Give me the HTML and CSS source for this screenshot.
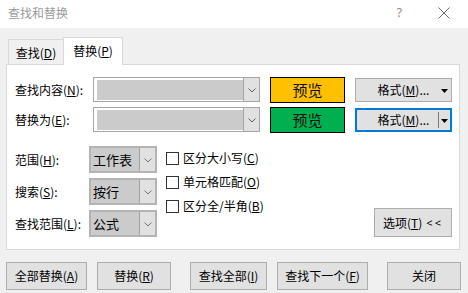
FILE: index.html
```html
<!DOCTYPE html>
<html lang="zh">
<head>
<meta charset="utf-8">
<title>查找和替换</title>
<link rel="stylesheet" href="styles.css">
</head>
<body>
<div class="window">
  <div class="titlebar">
    <span class="title">查找和替换</span>
    <span class="help">?</span>
    <span class="close"><svg width="12" height="12" viewBox="0 0 12 12"><path d="M0.5 0.5L11.5 11.5M11.5 0.5L0.5 11.5" stroke="#6b6b6b" stroke-width="1" fill="none"/></svg></span>
  </div>
  <div class="tabs">
    <div class="tab">查找(<u>D</u>)</div>
    <div class="tab active">替换(<u>P</u>)</div>
  </div>
  <div class="panel">
    <div class="top-grid">
      <div class="label">查找内容(<u>N</u>):</div>
      <div class="combo wide">
        <div class="field"></div>
        <div class="drop"><svg width="8" height="5" viewBox="0 0 8 5"><path d="M0.5 0.5L4 4L7.5 0.5" stroke="#606060" fill="none"/></svg></div>
      </div>
      <div class="preview yellow">预览</div>
      <div class="fmt"><span class="fmt-text">格式(<u>M</u>)...</span><span class="fmt-arrow"><svg width="7" height="4" viewBox="0 0 7 4"><path d="M0 0H7L3.5 4Z" fill="#000"/></svg></span></div>

      <div class="label">替换为(<u>E</u>):</div>
      <div class="combo wide">
        <div class="field"></div>
        <div class="drop"><svg width="8" height="5" viewBox="0 0 8 5"><path d="M0.5 0.5L4 4L7.5 0.5" stroke="#606060" fill="none"/></svg></div>
      </div>
      <div class="preview green">预览</div>
      <div class="fmt focused"><span class="fmt-text">格式(<u>M</u>)...</span><span class="fmt-arrow"><svg width="7" height="4" viewBox="0 0 7 4"><path d="M0 0H7L3.5 4Z" fill="#000"/></svg></span></div>
    </div>

    <div class="lower">
      <div class="opt-grid">
        <div class="label">范围(<u>H</u>):</div>
        <div class="combo small"><div class="value">工作表</div><div class="drop"><svg width="8" height="5" viewBox="0 0 8 5"><path d="M0.5 0.5L4 4L7.5 0.5" stroke="#707070" fill="none"/></svg></div></div>
        <div class="label">搜索(<u>S</u>):</div>
        <div class="combo small"><div class="value">按行</div><div class="drop"><svg width="8" height="5" viewBox="0 0 8 5"><path d="M0.5 0.5L4 4L7.5 0.5" stroke="#707070" fill="none"/></svg></div></div>
        <div class="label">查找范围(<u>L</u>):</div>
        <div class="combo small"><div class="value">公式</div><div class="drop"><svg width="8" height="5" viewBox="0 0 8 5"><path d="M0.5 0.5L4 4L7.5 0.5" stroke="#707070" fill="none"/></svg></div></div>
      </div>
      <div class="checks">
        <div class="check"><span class="box"></span>区分大小写(<u>C</u>)</div>
        <div class="check"><span class="box"></span>单元格匹配(<u>O</u>)</div>
        <div class="check"><span class="box"></span>区分全/半角(<u>B</u>)</div>
      </div>
      <div class="btn options">选项(<u>T</u>) <span class="lt">&lt;&lt;</span></div>
    </div>
  </div>
  <div class="buttons">
    <div class="btn b-all">全部替换(<u>A</u>)</div>
    <div class="btn b-rep">替换(<u>R</u>)</div>
    <div class="btn b-findall sep">查找全部(<u>I</u>)</div>
    <div class="btn b-next">查找下一个(<u>F</u>)</div>
    <div class="btn b-close sep">关闭</div>
  </div>
</div>
</body>
</html>
```

FILE: styles.css
```css
* { box-sizing: border-box; }
html, body {
  margin: 0;
  padding: 0;
}
body {
  width: 468px;
  height: 293px;
  overflow: hidden;
  background: #f0f0f0;
  font-family: "Noto Sans CJK SC", "Noto Sans", sans-serif;
  font-size: 12px;
  color: #000;
}
u { text-decoration: underline; text-underline-offset: 1px; }

.titlebar {
  height: 28px;
  background: #fff;
  display: flex;
  align-items: center;
  padding-left: 8px;
}
.title {
  color: #9a9a9a;
  font-size: 12px;
  line-height: 16px;
  flex: 1;
  margin-top: -2px;
}
.help {
  color: #8a8a8a;
  font-family: "Noto Sans", sans-serif;
  font-size: 12px;
  line-height: 14px;
  margin-right: 36px;
  margin-top: -2px;
}
.close {
  display: flex;
  margin-right: 18px;
  margin-top: -2px;
}

.tabs {
  display: flex;
  align-items: flex-end;
  padding-left: 8px;
  padding-top: 9px;
  position: relative;
  z-index: 2;
}
.tab {
  height: 25px;
  width: 55px;
  border: 1px solid #d9d9d9;
  border-right: none;
  border-bottom: none;
  background: #f0f0f0;
  display: flex;
  align-items: center;
  justify-content: center;
  line-height: 16px;
  padding-top: 1px;
}
.tab.active {
  height: 28px;
  width: 60px;
  border-right: 1px solid #d9d9d9;
  background: #fff;
  margin-bottom: -1px;
  padding-top: 0;
  padding-bottom: 2px;
}

.panel {
  margin-left: 6px;
  width: 454px;
  height: 186px;
  background: #fff;
  border: 1px solid #d9d9d9;
  padding: 12px 7px 0 8px;
}

.label {
  display: flex;
  align-items: center;
  line-height: 16px;
  white-space: nowrap;
}

.top-grid {
  display: grid;
  grid-template-columns: 68px 167px 75px 97px;
  column-gap: 10px;
  grid-auto-rows: 26px;
  row-gap: 4px;
}

.combo {
  display: flex;
  background: #fff;
}
.combo.wide {
  height: 25px;
  border: 1px solid #a6a6a6;
  padding: 2px 0 1px 3px;
}
.combo.wide .field {
  flex: 1;
  background: #cbcbcb;
}
.combo.wide .drop {
  width: 16px;
  margin: -2px 0 -1px 0;
  border-left: 1px solid #a6a6a6;
  background: #e1e1e1;
  display: flex;
  align-items: center;
  justify-content: center;
  padding-top: 1px;
}

.preview {
  height: 26px;
  border: 1px solid #000;
  display: flex;
  align-items: center;
  justify-content: center;
  font-size: 15px;
  line-height: 18px;
  color: #111;
}
.preview.yellow { background: #ffc000; }
.preview.green { background: #00b050; }

.fmt {
  margin-top: 1px;
  height: 24px;
  border: 1px solid #adadad;
  background: #e1e1e1;
  display: flex;
  align-items: stretch;
}
.fmt-text {
  flex: 1;
  display: flex;
  align-items: center;
  justify-content: center;
  padding-left: 13px;
  line-height: 16px;
}
.fmt-arrow {
  width: 13px;
  display: flex;
  align-items: center;
  justify-content: center;
  padding-top: 1px;
}
.fmt.focused {
  border: 2px solid #0078d7;
}
.fmt.focused .fmt-text { padding-left: 12px; }
.fmt.focused .fmt-arrow {
  width: 12px;
  margin: 2px 0;
  border-left: 1px solid #7a7a7a;
}

.lower {
  display: flex;
  margin-top: 13px;
  height: 91px;
}
.opt-grid {
  display: grid;
  grid-template-columns: 74px 68px;
  grid-auto-rows: 27px;
  row-gap: 5px;
}
.combo.small {
  height: 27px;
  border: 2px solid #b4b4b4;
  background: #cbcbcb;
  display: flex;
}
.combo.small .value {
  flex: 1;
  display: flex;
  align-items: center;
  padding-left: 2px;
  font-size: 13px;
  line-height: 16px;
}
.combo.small .drop {
  width: 16px;
  border-left: 1px solid #a0a0a0;
  background: #e1e1e1;
  display: flex;
  align-items: center;
  justify-content: center;
  padding-top: 1px;
}

.checks {
  margin-left: 9px;
  display: flex;
  flex-direction: column;
}
.check {
  height: 24px;
  display: flex;
  align-items: center;
  line-height: 16px;
  white-space: nowrap;
}
.box {
  width: 13px;
  height: 13px;
  border: 1px solid #333;
  background: #fff;
  margin-right: 4px;
}

.btn {
  border: 1px solid #adadad;
  background: #e1e1e1;
  display: flex;
  align-items: center;
  justify-content: center;
  line-height: 16px;
  white-space: nowrap;
}
.options {
  margin-left: auto;
  align-self: flex-end;
  width: 78px;
  height: 29px;
}
.lt {
  letter-spacing: 2px;
  margin-left: 4px;
  font-size: 11px;
  font-family: "Noto Sans", sans-serif;
}

.buttons {
  display: flex;
  gap: 10px;
  padding-left: 6px;
  margin-top: 12px;
}
.buttons .btn { height: 28px; }
.buttons .sep { margin-left: 9px; }
.b-all { width: 81px; }
.b-rep { width: 74px; }
.b-findall { width: 77px; }
.b-next { width: 91px; }
.b-close { width: 74px; }
```
